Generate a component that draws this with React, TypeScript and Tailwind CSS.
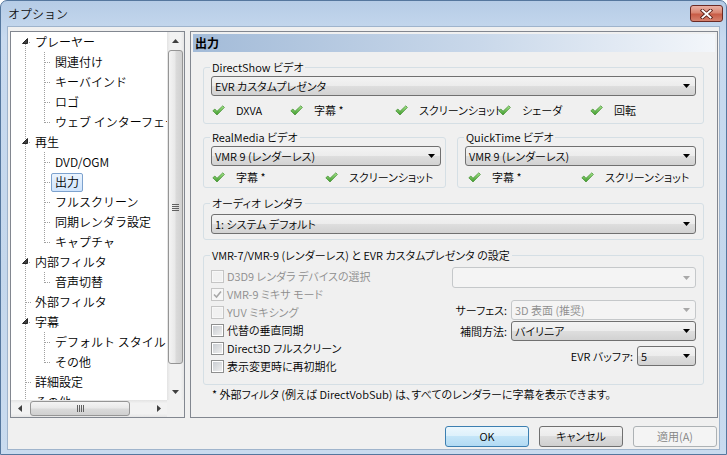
import React from 'react';

type TreeNode = {
  label: string;
  level: 0 | 1;
  expanded?: boolean;
  last?: boolean;
  selected?: boolean;
};

const tree: TreeNode[] = [
  { label: 'プレーヤー', level: 0, expanded: true },
  { label: '関連付け', level: 1 },
  { label: 'キーバインド', level: 1 },
  { label: 'ロゴ', level: 1 },
  { label: 'ウェブ インターフェース', level: 1, last: true },
  { label: '再生', level: 0, expanded: true },
  { label: 'DVD/OGM', level: 1 },
  { label: '出力', level: 1, selected: true },
  { label: 'フルスクリーン', level: 1 },
  { label: '同期レンダラ設定', level: 1 },
  { label: 'キャプチャ', level: 1, last: true },
  { label: '内部フィルタ', level: 0, expanded: true },
  { label: '音声切替', level: 1, last: true },
  { label: '外部フィルタ', level: 0 },
  { label: '字幕', level: 0, expanded: true },
  { label: 'デフォルト スタイル', level: 1 },
  { label: 'その他', level: 1, last: true },
  { label: '詳細設定', level: 0 },
  { label: 'その他', level: 0 },
];

const vmrChecks = [
  { label: 'D3D9 レンダラ デバイスの選択', disabled: true },
  { label: 'VMR-9 ミキサ モード', disabled: true, checked: true },
  { label: 'YUV ミキシング', disabled: true },
  { label: '代替の垂直同期' },
  { label: 'Direct3D フルスクリーン' },
  { label: '表示変更時に再初期化' },
];

const dotted = { stroke: '#a0a0a0', strokeWidth: 1, strokeDasharray: '1 1' };

// connector lines + expand glyph drawn per row
function TreeLines({ node, first }: { node: TreeNode; first: boolean }) {
  if (node.level === 1) {
    return (
      <svg width="40" height="20" className="shrink-0">
        <line x1="14.5" y1="0" x2="14.5" y2="20" {...dotted} />
        <line x1="33.5" y1="0" x2="33.5" y2={node.last ? 11 : 20} {...dotted} />
        <line x1="34" y1="10.5" x2="40" y2="10.5" {...dotted} />
      </svg>
    );
  }
  return (
    <svg width="20" height="20" className="shrink-0">
      <line x1="14.5" y1={first ? 10 : 0} x2="14.5" y2="20" {...dotted} />
      {node.expanded ? (
        <>
          <line x1="18" y1="10.5" x2="20" y2="10.5" {...dotted} />
          <path d="M16.5 6.5V11.5H11.5Z" fill="#404040" stroke="#262626" strokeWidth="1" strokeLinejoin="round" />
        </>
      ) : (
        <line x1="15" y1="10.5" x2="20" y2="10.5" {...dotted} />
      )}
    </svg>
  );
}

function Arrow({ dir, color = '#404040' }: { dir: 'up' | 'down' | 'left' | 'right'; color?: string }) {
  const d = {
    up: 'M0 4L3.5 0L7 4Z',
    down: 'M0 0H7L3.5 4Z',
    left: 'M4 0V7L0 3.5Z',
    right: 'M0 0V7L4 3.5Z',
  }[dir];
  const horiz = dir === 'up' || dir === 'down';
  return (
    <svg width={horiz ? 7 : 4} height={horiz ? 4 : 7} className="shrink-0">
      <path d={d} fill={color} />
    </svg>
  );
}

function TreeView() {
  return (
    <div className="flex h-[387px] w-[175px] flex-col border border-[#828790] bg-white">
      <div className="flex min-h-0 flex-1">
        <div className="min-w-0 flex-1 overflow-hidden">
          {tree.map((node, i) => (
            <div key={i} className="flex h-[20px] items-center">
              <TreeLines node={node} first={i === 0} />
              <span
                className={
                  'flex h-[19px] items-center whitespace-nowrap rounded-[2px] border px-[3px] leading-[16px] ' +
                  (node.selected
                    ? 'border-[#7da2ce] bg-[linear-gradient(#ebf4fe,#cfe4fd)]'
                    : 'border-transparent')
                }
              >
                {node.label}
              </span>
            </div>
          ))}
        </div>
        {/* vertical scrollbar */}
        <div className="flex w-[17px] flex-col bg-[linear-gradient(90deg,#e3e3e3,#f2f2f2_20%,#f2f2f2_80%,#e6e6e6)]">
          <div className="flex h-[17px] items-center justify-center">
            <Arrow dir="up" />
          </div>
          <div className="flex-1 px-[1px] pt-[1px]">
            <div className="flex h-[314px] items-center justify-center rounded-[3px] border border-[#959595] bg-[linear-gradient(90deg,#f4f4f4,#e9e9e9_45%,#dadada_55%,#d0d0d0)]">
              <svg width="7" height="7">
                <path d="M0 0.5H7M0 2.5H7M0 4.5H7M0 6.5H7" stroke="#606060" strokeWidth="1" />
              </svg>
            </div>
          </div>
          <div className="flex h-[17px] items-center justify-center">
            <Arrow dir="down" />
          </div>
        </div>
      </div>
      <div className="flex h-[17px]">
        {/* horizontal scrollbar */}
        <div className="flex flex-1 bg-[linear-gradient(#e3e3e3,#f2f2f2_20%,#f2f2f2_80%,#e6e6e6)]">
          <div className="flex w-[17px] items-center justify-center">
            <Arrow dir="left" />
          </div>
          <div className="py-[1px] pl-[2px]">
            <div className="flex h-full w-[100px] items-center justify-center rounded-[3px] border border-[#959595] bg-[linear-gradient(#f4f4f4,#e9e9e9_45%,#dadada_55%,#d0d0d0)]">
              <svg width="7" height="7">
                <path d="M0.5 0V7M2.5 0V7M4.5 0V7M6.5 0V7" stroke="#606060" strokeWidth="1" />
              </svg>
            </div>
          </div>
          <div className="flex-1" />
          <div className="flex w-[17px] items-center justify-center">
            <Arrow dir="right" />
          </div>
        </div>
        <div className="w-[17px] bg-[#f0f0f0]" />
      </div>
    </div>
  );
}

function CheckIcon() {
  return (
    <svg width="13" height="11" viewBox="0 0 13 11" className="shrink-0">
      <defs>
        <linearGradient id="chk" x1="0" y1="0" x2="0" y2="1">
          <stop offset="0" stopColor="#a8e68e" />
          <stop offset="1" stopColor="#3e9a2b" />
        </linearGradient>
      </defs>
      <path
        d="M0.8 5.8L2.9 4L5 6.3L10.8 0.8L12.4 2.4L5 10Z"
        fill="url(#chk)"
        stroke="#3f8c2d"
        strokeWidth="0.7"
        strokeLinejoin="round"
      />
    </svg>
  );
}

function Feature({ label, width }: { label: string; width: string }) {
  return (
    <div className={'flex items-center ' + width}>
      <CheckIcon />
      <span className="ml-[11px] whitespace-nowrap">{label}</span>
    </div>
  );
}

function Combo({
  text,
  width,
  tall,
  disabled,
}: {
  text: string;
  width: string;
  tall?: boolean;
  disabled?: boolean;
}) {
  return (
    <div
      className={
        'flex items-center rounded-[3px] border ' +
        (tall ? 'h-[21px] ' : 'h-[20px] ') +
        (disabled
          ? 'border-[#c5c8ca] bg-[#f4f4f4] text-[#8d8d8d] '
          : 'border-[#707070] bg-[linear-gradient(#f3f3f3,#ececec_50%,#dedede_50%,#d2d2d2)] text-black ') +
        width
      }
    >
      <span className="min-w-0 flex-1 truncate pl-[3px]">{text}</span>
      <span className="mr-[5px]">
        <Arrow dir="down" color={disabled ? '#a8a8a8' : '#000'} />
      </span>
    </div>
  );
}

function CheckBox({ checked, disabled }: { checked?: boolean; disabled?: boolean }) {
  return (
    <span
      className={
        'flex h-[13px] w-[13px] shrink-0 items-center justify-center border ' +
        (disabled ? 'border-[#c5c5c5] bg-[#f7f7f7]' : 'border-[#8e8f8f] bg-white')
      }
    >
      {checked ? (
        <svg width="9" height="9" viewBox="0 0 9 9">
          <path d="M1 4.5L3.5 7L8 1.5" fill="none" stroke="#a8a8a8" strokeWidth="1.6" />
        </svg>
      ) : (
        <span
          className={
            'h-[9px] w-[9px] ' +
            (disabled ? 'bg-[#f1f1f1]' : 'bg-[linear-gradient(135deg,#c9cdd2,#eeeeee)]')
          }
        />
      )}
    </span>
  );
}

function Legend({ children }: { children: React.ReactNode }) {
  return (
    <div className="-mt-[8px] -ml-[1px] w-fit bg-[#f0f0f0] px-[2px] leading-[14px] whitespace-nowrap">
      {children}
    </div>
  );
}

function OutputPage() {
  return (
    <div className="flex h-[387px] w-[528px] flex-col border border-[#828790] bg-[#f0f0f0]">
      <div className="mx-[2px] mt-[2px] h-[18px] bg-[linear-gradient(90deg,#a3bbd8,#c9d8ea_55%,#f3f6fa)] pl-[2px] text-[12px] leading-[18px] font-bold">
        出力
      </div>
      <div className="pr-[13px] pl-[12px] text-[11px] leading-[14px] [font-feature-settings:'palt']">
        {/* DirectShow */}
        <div className="mt-[15px] rounded-[3px] border border-[#d5dfe5] px-[7px] pb-[6px]">
          <Legend>DirectShow ビデオ</Legend>
          <div className="mt-[2px]">
            <Combo text="EVR カスタムプレゼンタ" width="w-full" />
          </div>
          <div className="mt-[7px] flex h-[14px] items-center pl-[1px]">
            <Feature label="DXVA" width="w-[78px]" />
            <Feature label="字幕 *" width="w-[105px]" />
            <Feature label="スクリーンショット" width="w-[103px]" />
            <Feature label="シェーダ" width="w-[92px]" />
            <Feature label="回転" width="" />
          </div>
        </div>

        {/* RealMedia / QuickTime */}
        <div className="mt-[13px] flex gap-[11px]">
          <div className="w-[243px] rounded-[3px] border border-[#d5dfe5] pr-[4px] pb-[3px] pl-[7px]">
            <Legend>RealMedia ビデオ</Legend>
            <div className="mt-[2px]">
              <Combo text="VMR 9 (レンダーレス)" width="w-full" />
            </div>
            <div className="mt-[4px] flex h-[14px] items-center pl-[1px]">
              <Feature label="字幕 *" width="w-[113px]" />
              <Feature label="スクリーンショット" width="" />
            </div>
          </div>
          <div className="flex-1 rounded-[3px] border border-[#d5dfe5] pr-[7px] pb-[3px] pl-[7px]">
            <Legend>QuickTime ビデオ</Legend>
            <div className="mt-[2px]">
              <Combo text="VMR 9 (レンダーレス)" width="w-full" />
            </div>
            <div className="mt-[4px] flex h-[14px] items-center pl-[3px]">
              <Feature label="字幕 *" width="w-[113px]" />
              <Feature label="スクリーンショット" width="" />
            </div>
          </div>
        </div>

        {/* Audio */}
        <div className="mt-[15px] rounded-[3px] border border-[#d5dfe5] px-[7px] pb-[5px]">
          <Legend>オーディオ レンダラ</Legend>
          <div className="mt-[4px]">
            <Combo text="1: システム デフォルト" width="w-full" />
          </div>
        </div>

        {/* VMR / EVR settings */}
        <div className="mt-[15px] rounded-[3px] border border-[#d5dfe5] px-[7px] pb-[9px]">
          <Legend>VMR-7/VMR-9 (レンダーレス) と EVR カスタムプレゼンタ の設定</Legend>
          <div className="flex">
            <div className="mt-[5px] flex w-[230px] flex-col">
              {vmrChecks.map((c) => (
                <div key={c.label} className="flex h-[18px] items-center">
                  <CheckBox checked={c.checked} disabled={c.disabled} />
                  <span className={'ml-[3px] whitespace-nowrap ' + (c.disabled ? 'text-[#8d8d8d]' : '')}>
                    {c.label}
                  </span>
                </div>
              ))}
            </div>
            <div className="flex flex-1 flex-col items-end">
              <div className="mt-[5px]">
                <Combo text="" width="w-[244px]" tall disabled />
              </div>
              <div className="mt-[12px] flex items-center">
                <span className="mr-[4px]">サーフェス:</span>
                <Combo text="3D 表面 (推奨)" width="w-[185px]" disabled />
              </div>
              <div className="mt-[1px] flex items-center">
                <span className="mr-[4px]">補間方法:</span>
                <Combo text="バイリニア" width="w-[185px]" />
              </div>
              <div className="mt-[5px] flex items-center">
                <span className="mr-[4px]">EVR バッファ:</span>
                <Combo text="5" width="w-[59px]" />
              </div>
            </div>
          </div>
        </div>

        <div className="mt-[2px] ml-[9px] whitespace-nowrap">
          * 外部フィルタ (例えば DirectVobSub) は、すべてのレンダラーに字幕を表示できます。
        </div>
      </div>
    </div>
  );
}

function DialogButton({ label, kind }: { label: string; kind: 'default' | 'normal' | 'disabled' }) {
  const styles = {
    default: 'border-[#3c7fb1] bg-[linear-gradient(#ecf7fd,#dcf0fb_50%,#c4e5f8_50%,#b2daf3)] text-black',
    normal: 'border-[#707070] bg-[linear-gradient(#f3f3f3,#ebebeb_50%,#dddddd_50%,#cfcfcf)] text-black',
    disabled: 'border-[#adb2b5] bg-[#f4f4f4] text-[#838383]',
  }[kind];
  return (
    <div
      className={
        'flex h-[21px] w-[84px] items-center justify-center rounded-[3px] border text-[11px] [font-feature-settings:\'palt\'] ' +
        styles
      }
    >
      {label}
    </div>
  );
}

export default function App() {
  return (
    <div className="h-[455px] w-[727px] bg-white font-['Noto_Sans_CJK_JP','Noto_Sans_CJK_SC',sans-serif] text-[12px] font-[350] text-black">
      <div className="flex h-full flex-col rounded-t-[7px] border border-[#55779e] bg-[linear-gradient(#b6cce6,#c8daef_8%,#c4d7ec_60%,#c9dbef)]">
        {/* title bar */}
        <div className="flex h-[25px] shrink-0 items-start justify-between">
          <span className="mt-[4px] pl-[7px] leading-[17px] text-[#111]">オプション</span>
          <div className="mt-[4px] mr-[3px] flex h-[17px] w-[33px] items-center justify-center rounded-[3px] border border-[#6b2a24] bg-[linear-gradient(#eab1a5,#d98672_45%,#c85c46_55%,#d6826e)]">
            <svg width="13" height="10" viewBox="0 0 13 10">
              <path d="M2.5 1.5L10.5 8.5M10.5 1.5L2.5 8.5" stroke="#5a2018" strokeWidth="3.6" strokeLinecap="square" />
              <path d="M2.5 1.5L10.5 8.5M10.5 1.5L2.5 8.5" stroke="#ffffff" strokeWidth="1.9" strokeLinecap="square" />
            </svg>
          </div>
        </div>
        {/* client area */}
        <div className="mx-[6px] mb-[4px] flex min-h-0 flex-1 flex-col border border-[#9fb4cc] bg-[#f0f0f0]">
          <div className="mt-[4px] flex gap-[5px] pr-[1px] pl-[2px]">
            <TreeView />
            <OutputPage />
          </div>
          <div className="mt-[8px] flex justify-end gap-[10px] pr-[2px]">
            <DialogButton label="OK" kind="default" />
            <DialogButton label="キャンセル" kind="normal" />
            <DialogButton label="適用(A)" kind="disabled" />
          </div>
        </div>
      </div>
    </div>
  );
}
